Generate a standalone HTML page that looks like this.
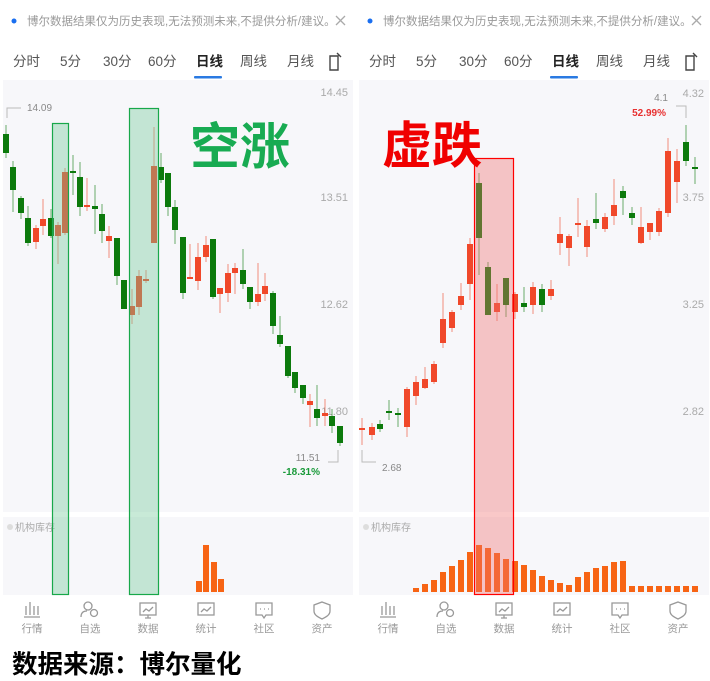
<!DOCTYPE html><html><head><meta charset="utf-8"><style>
body{margin:0;width:710px;height:681px;background:#fff;overflow:hidden;font-family:"Liberation Sans","Noto Sans CJK SC",sans-serif}
svg{position:absolute;left:0;top:0}
</style></head><body>
<svg id="s" width="710" height="681" xmlns="http://www.w3.org/2000/svg" font-family="Liberation Sans, Noto Sans CJK SC, sans-serif">
<rect x="3" y="80" width="350" height="432" fill="#f7f7fa"/>
<rect x="359" y="80" width="350" height="432" fill="#f7f7fa"/>
<rect x="3" y="517" width="350" height="78" fill="#f7f7fa"/>
<rect x="359" y="517" width="350" height="78" fill="#f7f7fa"/>
<g id="c"></g>
</svg>
<script>
var s=document.getElementById('c'),h='';
function t(x,y,str,sz,col,anc,w){h+='<text x="'+x+'" y="'+y+'" font-size="'+sz+'" fill="'+col+'"'+(anc?' text-anchor="'+anc+'"':'')+(w?' font-weight="bold"':'')+'>'+str+'</text>';}
[0,356].forEach(function(o){
 h+='<circle cx="'+(o+14)+'" cy="21" r="2.5" fill="#1a6ff0"/>';
 t(o+27,25,'博尔数据结果仅为历史表现,无法预测未来,不提供分析/建议。',11.5,'#999');
 h+='<path d="M'+(o+336)+' 16l9 9M'+(o+345)+' 16l-9 9" stroke="#aaa" stroke-width="1.3"/>';
 var tabs=[['分时',13],['5分',60],['30分',103],['60分',148],['日线',196],['周线',240],['月线',287]];
 tabs.forEach(function(a,i){t(o+a[1],66,a[0],13.5,i==4?'#222':'#555',null,i==4);});
 h+='<rect x="'+(o+194)+'" y="76" width="28" height="2.5" rx="1" fill="#2a7ae2"/>';
 h+='<path d="M'+(o+330)+' 56h8v14h-8zM'+(o+337)+' 53l4 4" fill="none" stroke="#444" stroke-width="1.4"/>';
 t(o+15,531,'机构库存',10,'#aaa');h+='<circle cx="'+(o+10)+'" cy="527" r="3" fill="#ddd"/>';
 var nav=['行情','自选','数据','统计','社区','资产'];
 nav.forEach(function(n,i){var x=o+32+i*58;
  h+='<g stroke="#999" stroke-width="1.3" fill="none">';
  if(i==0)h+='<path d="M'+(x-8)+' 617h16M'+(x-6)+' 615v-9M'+(x-2)+' 615v-13M'+(x+2)+' 615v-9M'+(x+6)+' 615v-9"/>';
  if(i==1)h+='<circle cx="'+(x-2)+'" cy="606" r="4"/><path d="M'+(x-9)+' 617c0-5 3-6 6-6"/><circle cx="'+(x+4)+'" cy="613" r="3.5"/>';
  if(i==2||i==3)h+='<rect x="'+(x-8)+'" y="603" width="16" height="12"/><path d="M'+(x-5)+' 612l3-3 3 2 4-4"/>'+(i==2?'<path d="M'+(x-3)+' 618h6M'+x+' 615v3"/>':'');
  if(i==4)h+='<path d="M'+(x-8)+' 603h16v12h-6l-2 3-2-3h-6z"/><path d="M'+(x-4)+' 609h1M'+x+' 609h1M'+(x+4)+' 609h1"/>';
  if(i==5)h+='<path d="M'+x+' 602l8 3v6c0 4-4 6-8 8-4-2-8-4-8-8v-6z"/>';
  h+='</g>';
  t(x,632,n,10.5,'#999','middle');
 });
});
[['14.45',96],['13.51',201],['12.62',308],['11.80',415]].forEach(function(a){t(348,a[1],a[0],11,'#aaa','end');});
[['4.32',97],['3.75',201],['3.25',308],['2.82',415]].forEach(function(a){t(704,a[1],a[0],11,'#aaa','end');});
var G='#0c7a0c',R='#f0482a';
function cd(x,o1,o2,w1,w2,c,ww){ww=ww||6;h+='<line x1="'+x+'" y1="'+w1+'" x2="'+x+'" y2="'+w2+'" stroke="'+c+'" stroke-width="1" opacity="0.6"/>';h+='<rect x="'+(x-ww/2)+'" y="'+o1+'" width="'+ww+'" height="'+Math.max(2,o2-o1)+'" fill="'+c+'"/>';}
var L=[[6,134,153,125,158,G],[13,167,190,161,212,G],[21,198,213,196,219,G],[28,218,243,206,246,G],[36,228,242,225,249,R],[43,219,226,199,235,R],[51,218,236,209,238,G],[58,225,236,222,264,R],[65,172,233,168,235,R],[73,171,173,155,195,G],[80,177,207,162,216,G],[87,205,207,178,211,R],[95,206,209,185,234,G],[102,214,231,204,243,G],[109,236,241,226,258,R],[117,238,276,238,285,G],[124,280,309,280,309,G],[132,306,315,289,324,R],[139,276,307,270,315,R],[146,279,280,270,283,R],[154,166,243,127,243,R],[161,167,180,153,183,G],[168,173,207,173,216,G],[175,207,230,200,244,G],[183,237,293,237,299,G],[190,277,279,244,279,R],[198,257,281,243,290,R],[206,245,257,236,262,R],[213,239,297,239,299,G],[220,288,294,288,313,R],[228,273,293,264,302,R],[235,268,273,263,294,R],[243,270,284,249,289,G],[250,287,302,287,309,G],[258,294,302,263,306,R],[265,286,294,273,301,R],[273,293,326,291,334,G],[280,335,344,316,347,G],[288,346,376,346,378,G],[295,372,388,372,393,G],[303,385,398,385,404,G],[310,401,405,394,427,R],[317,409,418,385,426,G],[325,413,416,399,426,R],[332,416,426,409,433,G],[340,426,443,426,446,G]];
L.forEach(function(a){cd(a[0],a[1],a[2],a[3],a[4],a[5]);});
var Rc=[[362,428,430,418,445,R],[372,427,435,423,440,R],[380,424,429,420,432,G],[389,411,413,400,420,G],[398,413,415,408,427,G],[407,389,427,387,437,R],[416,382,396,376,405,R],[425,379,388,367,389,R],[434,364,382,361,384,R],[443,319,343,293,348,R],[452,312,328,310,332,R],[461,296,305,283,310,R],[470,244,284,238,300,R],[479,183,238,173,275,G],[488,267,315,262,315,G],[497,303,312,284,321,R],[506,278,305,278,317,G],[515,294,312,292,319,R],[524,303,307,287,312,G],[533,287,305,282,314,R],[542,289,305,284,312,G],[551,289,296,280,300,R],[560,234,243,217,255,R],[569,236,248,234,266,R],[578,223,225,198,237,R],[587,226,247,220,257,R],[596,219,223,193,229,G],[605,217,229,213,232,R],[614,205,216,179,225,R],[623,191,198,186,215,G],[632,213,218,207,225,G],[641,227,243,207,244,R],[650,223,232,223,240,R],[659,211,232,208,236,R],[668,151,213,138,217,R],[677,161,182,149,203,R],[686,142,161,125,166,G],[695,167,168,157,184,G]];
Rc.forEach(function(a){cd(a[0],a[1],a[2],a[3],a[4],a[5]);});
h+='<path d="M7 118v-10h14" fill="none" stroke="#bbb"/>';t(27,111,'14.09',10,'#888');
h+='<path d="M338 450v12h-10" fill="none" stroke="#bbb"/>';t(320,461,'11.51',10,'#888','end');t(320,475,'-18.31%',10,'#1a9a3a','end',true);
h+='<path d="M362 450v12h14" fill="none" stroke="#bbb"/>';t(382,471,'2.68',10,'#888');
h+='<path d="M686 118v-12h-10" fill="none" stroke="#bbb"/>';t(668,101,'4.1',10,'#888','end');t(666,116,'52.99%',10,'#e83030','end',true);
h+='<g fill="#f76414">';
[[199,581],[206,545],[214,562],[221,579]].forEach(function(a){h+='<rect x="'+(a[0]-3)+'" y="'+a[1]+'" width="6" height="'+(592-a[1])+'"/>';});
var vt=[588,584,580,572,566,560,552,545,548,553,559,561,565,570,576,580,583,585,577,572,568,566,562,561,586,586,586,586,586,586,586,586];
vt.forEach(function(y,i){var x=355+(183+27*i)/3;h+='<rect x="'+(x-3)+'" y="'+y+'" width="6" height="'+(592-y)+'"/>';});
h+='</g>';
h+='<rect x="52.5" y="123.5" width="16" height="471" fill="rgba(110,200,150,0.38)" stroke="#18a84a" stroke-width="1.2"/>';
h+='<rect x="129.5" y="108.5" width="29" height="486" fill="rgba(110,200,150,0.38)" stroke="#18a84a" stroke-width="1.2"/>';
h+='<rect x="474.5" y="158.5" width="39" height="436" fill="rgba(240,110,110,0.38)" stroke="#f00" stroke-width="1.2"/>';
t(190,164,'空涨',50,'#18ab52',null,true);
t(382,163,'虚跌',50,'#f00000',null,true);
t(12,673,'数据来源：博尔量化',25.5,'#000',null,true);
s.innerHTML=h;
</script>
</body></html>
